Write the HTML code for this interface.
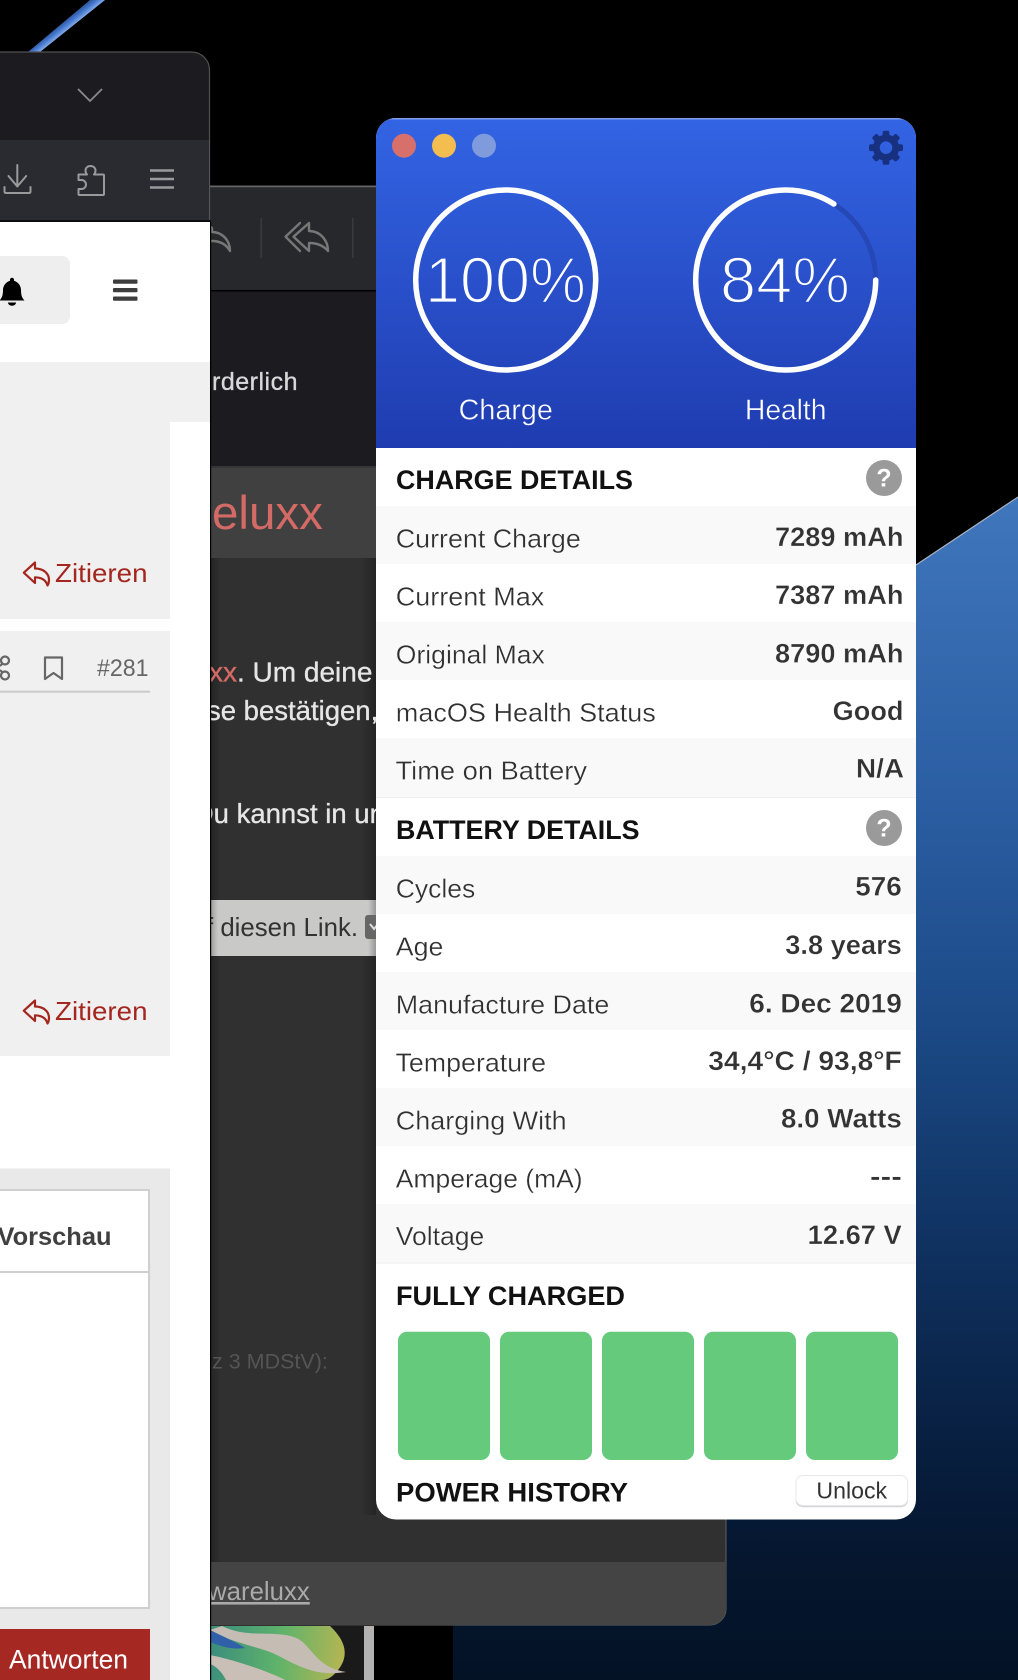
<!DOCTYPE html>
<html><head><meta charset="utf-8"><title>Battery</title>
<style>
html,body{margin:0;padding:0;background:#000;width:1018px;height:1680px;overflow:hidden}
svg{display:block}
text{font-family:"Liberation Sans",Arial,sans-serif}
.l{font-size:26px;fill:#303030;stroke-width:.3}
.w{stroke:#fff}.g{stroke:#f9f9f9}
.v{font-size:26.5px;font-weight:bold;fill:#333;stroke-width:.3}
.h{font-size:26.5px;font-weight:bold;fill:#111}
.m{fill:#e6e6e6;stroke:#e6e6e6;stroke-width:.35}
</style></head><body>
<svg width="1018" height="1680" viewBox="0 0 1018 1680" xmlns="http://www.w3.org/2000/svg">
<defs>
<linearGradient id="hdr" gradientUnits="userSpaceOnUse" x1="0" y1="118" x2="0" y2="448"><stop offset="0" stop-color="#3364e4"/><stop offset="1" stop-color="#1f3cb0"/></linearGradient>
<linearGradient id="wall" gradientUnits="userSpaceOnUse" x1="0" y1="500" x2="0" y2="1680"><stop offset="0" stop-color="#3f76bc"/><stop offset=".25" stop-color="#2b5ea3"/><stop offset=".45" stop-color="#1b4985"/><stop offset=".62" stop-color="#103363"/><stop offset=".8" stop-color="#081f40"/><stop offset=".9" stop-color="#05162e"/><stop offset="1" stop-color="#041226"/></linearGradient>
<linearGradient id="stripe" gradientUnits="userSpaceOnUse" x1="60" y1="15" x2="72" y2="30"><stop offset="0" stop-color="#0d1c3a"/><stop offset=".6" stop-color="#4478d0"/><stop offset="1" stop-color="#a8c8f4"/></linearGradient>
<linearGradient id="sl" x1="0" x2="1" y1="0" y2="0"><stop offset="0" stop-color="#000" stop-opacity=".25"/><stop offset="1" stop-color="#000" stop-opacity="0"/></linearGradient>
<linearGradient id="sr" x1="0" x2="1" y1="0" y2="0"><stop offset="0" stop-color="#000" stop-opacity="0"/><stop offset="1" stop-color="#000" stop-opacity=".25"/></linearGradient>
<linearGradient id="artg" gradientUnits="userSpaceOnUse" x1="215" y1="1640" x2="345" y2="1660"><stop offset="0" stop-color="#3d8f7c"/><stop offset=".5" stop-color="#5fb36a"/><stop offset="1" stop-color="#b7b552"/></linearGradient>
<clipPath id="panel"><rect x="376" y="118" width="540" height="1401.5" rx="20"/></clipPath>
<clipPath id="art"><rect x="210" y="1626" width="136" height="54"/></clipPath>
</defs>

<!-- wallpaper -->
<rect width="1018" height="1680" fill="#000"/>
<polygon points="916,565 1018,497 1018,1680 453,1680 453,1500 916,1500" fill="url(#wall)"/>
<line x1="916" y1="565" x2="1018" y2="497" stroke="#a9b4c4" stroke-width="1.2"/>
<polygon points="90,0 105,0 40,52 28,52" fill="url(#stripe)"/>

<!-- art at the bottom -->
<rect x="210" y="1626" width="154" height="54" fill="#1a1a1b"/>
<rect x="364" y="1626" width="10" height="54" fill="#b4b2b0"/>
<g clip-path="url(#art)">
<path d="M210 1626H330C345 1640 350 1655 338 1670C330 1680 325 1680 320 1680H210Z" fill="url(#artg)"/>
<path d="M222 1626C250 1640 280 1628 300 1640C312 1648 318 1668 346 1672C310 1678 290 1660 270 1652C250 1645 225 1640 210 1630Z" fill="#c5bcb3"/>
<path d="M210 1655C235 1660 270 1672 285 1680H226C222 1672 216 1666 210 1664Z" fill="#c9bfb6"/>
<path d="M210 1630C222 1636 232 1640 245 1648C232 1650 220 1646 210 1642Z" fill="#2f60a8"/>
</g>

<!-- middle dark window -->
<rect x="190" y="186" width="536" height="1439" rx="16" fill="#303030" stroke="#606060" stroke-width="1"/>
<path d="M190 187H726V290H190Z" fill="#27282b"/>
<line x1="190" y1="186.5" x2="376" y2="186.5" stroke="#666" stroke-width="1.5"/>
<rect x="190" y="290" width="536" height="1.5" fill="#000"/>
<rect x="190" y="291.5" width="536" height="174.5" fill="#1c1c20"/>
<rect x="190" y="466" width="536" height="92" fill="#404040"/>
<rect x="190" y="466" width="536" height="2" fill="#353535"/>
<path d="M190 1562H726V1609A16 16 0 0 1 710 1625H190Z" fill="#444"/>
<rect x="361" y="558" width="15" height="957" fill="url(#sr)"/>
<rect x="211" y="558" width="10" height="1004" fill="url(#sl)"/>
<!-- toolbar icons -->
<g fill="none" stroke="#777" stroke-width="2.4" stroke-linejoin="round" stroke-linecap="round">
<path d="M207 224L212 228V232C222 232 230 240 230 251C226 244 220 241 212 241"/>
<path d="M300 223L285.500 236.700L300 251"/>
<path d="M309 223L293.500 236.700L309 251V243C316 243 323 245 328 251C328 240 320 231 309 231Z"/>
</g>
<rect x="260.5" y="218" width="1.5" height="40" fill="#3a3a3c"/>
<rect x="352" y="218" width="1.5" height="40" fill="#3a3a3c"/>
<!-- middle text -->
<text x="212" y="390" font-size="25" letter-spacing=".5" class="m" style="fill:#d8d8d8;stroke:#d8d8d8">rderlich</text>
<text x="212" y="529" font-size="47.5" fill="#d36a66">eluxx</text>
<text x="209" y="681.7" font-size="28" class="m"><tspan style="fill:#d36a66;stroke:#d36a66">xx</tspan>. Um deine</text>
<text x="207" y="720" font-size="27.5" class="m">se bestätigen,</text>
<text x="193.8" y="823" font-size="27.5" class="m">Du kannst in unserem</text>
<rect x="210" y="900" width="166" height="56" fill="#c9c9c8"/>
<rect x="210" y="900" width="8" height="56" fill="url(#sl)"/>
<rect x="368" y="900" width="8" height="56" fill="url(#sr)"/>
<text x="206" y="936" font-size="25.8" fill="#333">f diesen Link.</text>
<rect x="365" y="915" width="16" height="24" rx="3" fill="#666"/>
<path d="M370 924l4 5 4-5" fill="none" stroke="#ddd" stroke-width="2"/>
<text x="212" y="1368.5" font-size="21.5" fill="#555">z 3 MDStV):</text>
<text x="208" y="1600" font-size="25.8" fill="#aaa" text-decoration="underline">wareluxx</text>

<!-- browser window -->
<rect x="-30" y="52" width="239.5" height="400" rx="18" fill="#1c1c20" stroke="#4f4f52" stroke-width="1.2"/>
<rect x="0" y="140" width="209" height="80" fill="#2a2b30"/>
<rect x="209" y="140" width="1" height="80" fill="#56565a"/>
<rect x="0" y="220" width="211" height="2" fill="#0c0c0e"/>
<rect x="0" y="222" width="210" height="1458" fill="#fff"/>
<rect x="210" y="222" width="1.2" height="1458" fill="#000"/>
<path d="M78 89L90 101L102 89" fill="none" stroke="#8a8a8c" stroke-width="1.8"/>
<g fill="none" stroke="#9a9a9c" stroke-width="2" stroke-linecap="round" stroke-linejoin="round">
<path d="M17.3 165V186M8.5 176L17.3 186.5L26.2 176"/>
<path d="M4.5 187V191.5Q4.5 193 6 193H29Q30.5 193 30.5 191.5V187"/>
<path d="M78.5 174.5H87c-1-1-1.5-2.5-1.5-4c0-2.5 2-4.5 5-4.5s5 2 5 4.5c0 1.5-.5 3-1.5 4H103q1 0 1 1V194q0 1-1 1H79.5q-1 0-1-1V189h3c2.5 0 4.5-2 4.5-4.5s-2-4.5-4.5-4.5h-3z"/>
</g>
<g stroke="#9a9a9c" stroke-width="2.4"><line x1="150" y1="170.5" x2="174" y2="170.5"/><line x1="150" y1="179" x2="174" y2="179"/><line x1="150" y1="187.5" x2="174" y2="187.5"/></g>
<!-- browser content -->
<path d="M0 256H62A8 8 0 0 1 70 264V316A8 8 0 0 1 62 324H0Z" fill="#eeeeee"/>
<path d="M12 277.8c-1.2 0-2 .9-2 2v.9C5.5 282 3 286 3 290c0 5-1 8-3.5 10.5h25c-2.500-2.500-3.500-5.500-3.500-10.500c0-4-2.500-8-7-9.300v-.9c0-1.100-.8-2-2-2z" fill="#000"/>
<path d="M8 302.500h8c0 2-2 3.200-4 3.200s-4-1.200-4-3.200z" fill="#000"/>
<g fill="#3d3d3d"><rect x="113" y="279.500" width="24.500" height="4.200" rx="1"/><rect x="113" y="288" width="24.500" height="4.200" rx="1"/><rect x="113" y="296.500" width="24.500" height="4.200" rx="1"/></g>
<rect x="0" y="362" width="210" height="60" fill="#f0f0f0"/>
<rect x="170" y="422" width="40" height="1258" fill="#fff"/>
<rect x="0" y="422" width="170" height="197" fill="#f0f0f0"/>
<rect x="0" y="631" width="170" height="425" fill="#f0f0f0"/>
<g fill="none" stroke="#a3271f" stroke-width="2.200" stroke-linejoin="round">
<path d="M23.800 572.700L35 562.500V568.500C43 568.500 49 573 49 580C49 582 48.500 584 47.500 585.500C46 580 42 577.500 35 577.300V583Z"/>
<path d="M23.800 981.700L35 971.500V977.500C43 977.500 49 982 49 989C49 991 48.500 993 47.500 994.500C46 989 42 986.500 35 986.300V992Z" transform="translate(0,29)"/>
</g>
<text x="55" y="582" font-size="26" fill="#a3271f" textLength="92.500" lengthAdjust="spacingAndGlyphs">Zitieren</text>
<text x="55" y="1020" font-size="26" fill="#a3271f" textLength="92.500" lengthAdjust="spacingAndGlyphs">Zitieren</text>
<text x="97" y="676" font-size="24" fill="#666" textLength="51.500" lengthAdjust="spacingAndGlyphs">#281</text>
<rect x="0" y="690.700" width="150" height="2" fill="#cbcbcb"/>
<path d="M45 657.500H62V679L53.500 673L45 679Z" fill="none" stroke="#666" stroke-width="2.200" stroke-linejoin="round"/>
<g fill="none" stroke="#666" stroke-width="2.200"><circle cx="5" cy="660.500" r="4"/><circle cx="5" cy="675.500" r="4"/><path d="M0 666L2 664M0 670L2 672"/></g>
<!-- editor -->
<rect x="0" y="1168.500" width="170" height="512" fill="#e9e9e9"/>
<rect x="-5" y="1190" width="154" height="418" fill="#fff" stroke="#cfcfcf" stroke-width="2"/>
<rect x="0" y="1271" width="149" height="2" fill="#cfcfcf"/>
<text x="-2.500" y="1245" font-size="25" font-weight="bold" fill="#404040" textLength="114" lengthAdjust="spacingAndGlyphs">Vorschau</text>
<rect x="0" y="1629" width="150" height="51" fill="#a52823"/>
<text x="9" y="1668.500" font-size="26.400" fill="#fff" textLength="119" lengthAdjust="spacingAndGlyphs">Antworten</text>

<!-- battery panel -->
<g clip-path="url(#panel)">
<rect x="376" y="118" width="540" height="1402" fill="#fff"/>
<rect x="376" y="118" width="540" height="330" fill="url(#hdr)"/>
<rect x="376" y="118" width="540" height="1.500" fill="#7f9fe8"/>
<!-- rows -->
<g fill="#f9f9f9">
<rect x="376" y="506" width="540" height="58"/><rect x="376" y="622" width="540" height="58"/><rect x="376" y="738" width="540" height="59"/>
<rect x="376" y="856" width="540" height="58"/><rect x="376" y="972" width="540" height="58"/><rect x="376" y="1088" width="540" height="58"/><rect x="376" y="1204" width="540" height="58.500"/>
</g>
<rect x="376" y="797" width="540" height="1" fill="#eee"/>
<rect x="376" y="1262.500" width="540" height="1" fill="#eee"/>
</g>
<!-- traffic lights -->
<circle cx="404" cy="145.700" r="12" fill="#d76f6b"/>
<circle cx="444" cy="145.700" r="12" fill="#f4bd4f"/>
<circle cx="484" cy="145.700" r="12" fill="#7f9bdc"/>
<!-- gear -->
<g transform="translate(886,147.700)" fill="#17307f">
<circle r="9.700" fill="none" stroke="#17307f" stroke-width="6.800"/>
<rect x="-3.400" y="-17" width="6.800" height="7" rx="2"/>
<rect x="-3.400" y="-17" width="6.800" height="7" rx="2" transform="rotate(45)"/>
<rect x="-3.400" y="-17" width="6.800" height="7" rx="2" transform="rotate(90)"/>
<rect x="-3.400" y="-17" width="6.800" height="7" rx="2" transform="rotate(135)"/>
<rect x="-3.400" y="-17" width="6.800" height="7" rx="2" transform="rotate(180)"/>
<rect x="-3.400" y="-17" width="6.800" height="7" rx="2" transform="rotate(225)"/>
<rect x="-3.400" y="-17" width="6.800" height="7" rx="2" transform="rotate(270)"/>
<rect x="-3.400" y="-17" width="6.800" height="7" rx="2" transform="rotate(315)"/>
</g>
<!-- big numbers -->
<text x="425" y="302.300" font-size="64.500" fill="#fff" stroke="url(#hdr)" stroke-width="1.800" textLength="161" lengthAdjust="spacingAndGlyphs">100%</text>
<text x="720" y="302.300" font-size="64.500" fill="#fff" stroke="url(#hdr)" stroke-width="1.800" textLength="130" lengthAdjust="spacingAndGlyphs">84%</text>
<circle cx="505.700" cy="280" r="90" fill="none" stroke="#fff" stroke-width="5.500"/>
<circle cx="785.700" cy="280" r="90" fill="none" stroke="#2647b6" stroke-width="5"/>
<path d="M875.700 280A90 90 0 1 1 833.900 204" fill="none" stroke="#fff" stroke-width="5.500" stroke-linecap="round"/>
<text x="458.600" y="419.300" font-size="29" fill="#fff" stroke="url(#hdr)" stroke-width=".4" textLength="94.300" lengthAdjust="spacingAndGlyphs">Charge</text>
<text x="745" y="419.300" font-size="29" fill="#fff" stroke="url(#hdr)" stroke-width=".4" textLength="81.400" lengthAdjust="spacingAndGlyphs">Health</text>

<!-- section headers -->
<text class="h" x="396" y="489" textLength="237" lengthAdjust="spacingAndGlyphs">CHARGE DETAILS</text>
<text class="h" x="396" y="839" textLength="243.500" lengthAdjust="spacingAndGlyphs">BATTERY DETAILS</text>
<text class="h" x="396" y="1305" textLength="229" lengthAdjust="spacingAndGlyphs">FULLY CHARGED</text>
<text class="h" x="396" y="1501.700" textLength="232" lengthAdjust="spacingAndGlyphs">POWER HISTORY</text>
<!-- question marks -->
<circle cx="884" cy="478" r="18" fill="#9a9a9a"/>
<text x="884" y="486.500" font-size="25" font-weight="bold" fill="#fff" text-anchor="middle">?</text>
<circle cx="884" cy="828" r="18" fill="#9a9a9a"/>
<text x="884" y="836.500" font-size="25" font-weight="bold" fill="#fff" text-anchor="middle">?</text>

<!-- labels -->
<text class="l g" x="395.800" y="547.300" textLength="185" lengthAdjust="spacingAndGlyphs">Current Charge</text>
<text class="l w" x="395.800" y="605.700" textLength="148.500" lengthAdjust="spacingAndGlyphs">Current Max</text>
<text class="l g" x="395.800" y="663.500" textLength="149" lengthAdjust="spacingAndGlyphs">Original Max</text>
<text class="l w" x="395.800" y="721.700" textLength="260" lengthAdjust="spacingAndGlyphs">macOS Health Status</text>
<text class="l g" x="395.500" y="779.500" textLength="191.500" lengthAdjust="spacingAndGlyphs">Time on Battery</text>
<text class="l g" x="395.800" y="897.300" textLength="79.500" lengthAdjust="spacingAndGlyphs">Cycles</text>
<text class="l w" x="395.800" y="955.700" textLength="47.500" lengthAdjust="spacingAndGlyphs">Age</text>
<text class="l g" x="395.800" y="1013.300" textLength="213.500" lengthAdjust="spacingAndGlyphs">Manufacture Date</text>
<text class="l w" x="395.500" y="1071.700" textLength="150.500" lengthAdjust="spacingAndGlyphs">Temperature</text>
<text class="l g" x="395.800" y="1129.300" textLength="170.800" lengthAdjust="spacingAndGlyphs">Charging With</text>
<text class="l w" x="395.800" y="1187.700" textLength="186.800" lengthAdjust="spacingAndGlyphs">Amperage (mA)</text>
<text class="l g" x="395.800" y="1245" textLength="88.500" lengthAdjust="spacingAndGlyphs">Voltage</text>
<!-- values -->
<text class="v g" x="775" y="546" textLength="128.500" lengthAdjust="spacingAndGlyphs">7289 mAh</text>
<text class="v w" x="775" y="604" textLength="128.500" lengthAdjust="spacingAndGlyphs">7387 mAh</text>
<text class="v g" x="775" y="662.300" textLength="128.500" lengthAdjust="spacingAndGlyphs">8790 mAh</text>
<text class="v w" x="832.700" y="720" textLength="70.800" lengthAdjust="spacingAndGlyphs">Good</text>
<text class="v g" x="856" y="777.700" textLength="48" lengthAdjust="spacingAndGlyphs">N/A</text>
<text class="v g" x="855.300" y="895.700" textLength="46.500" lengthAdjust="spacingAndGlyphs">576</text>
<text class="v w" x="785.300" y="954" textLength="116.500" lengthAdjust="spacingAndGlyphs">3.8 years</text>
<text class="v g" x="749.300" y="1012.300" textLength="152.500" lengthAdjust="spacingAndGlyphs">6. Dec 2019</text>
<text class="v w" x="708.300" y="1070" textLength="193.500" lengthAdjust="spacingAndGlyphs">34,4°C / 93,8°F</text>
<text class="v g" x="781" y="1127.700" textLength="120.800" lengthAdjust="spacingAndGlyphs">8.0 Watts</text>
<text class="v w" x="870" y="1185.500" textLength="31.800" lengthAdjust="spacingAndGlyphs">---</text>
<text class="v g" x="807.700" y="1244" textLength="94" lengthAdjust="spacingAndGlyphs">12.67 V</text>
<!-- green blocks -->
<g fill="#66ca7d">
<rect x="398" y="1331.700" width="92" height="128.300" rx="9"/>
<rect x="500" y="1331.700" width="92" height="128.300" rx="9"/>
<rect x="602" y="1331.700" width="92" height="128.300" rx="9"/>
<rect x="704" y="1331.700" width="92" height="128.300" rx="9"/>
<rect x="806" y="1331.700" width="92" height="128.300" rx="9"/>
</g>
<!-- unlock -->
<rect x="795.700" y="1476.500" width="112.300" height="30.700" rx="7" fill="#d4d4dc"/>
<rect x="796" y="1475.500" width="111.700" height="30" rx="7" fill="#fff" stroke="#e8e8ec" stroke-width="1"/>
<text x="816.400" y="1498.300" font-size="23" fill="#333" textLength="70.700" lengthAdjust="spacingAndGlyphs">Unlock</text>
</svg>
</body></html>
